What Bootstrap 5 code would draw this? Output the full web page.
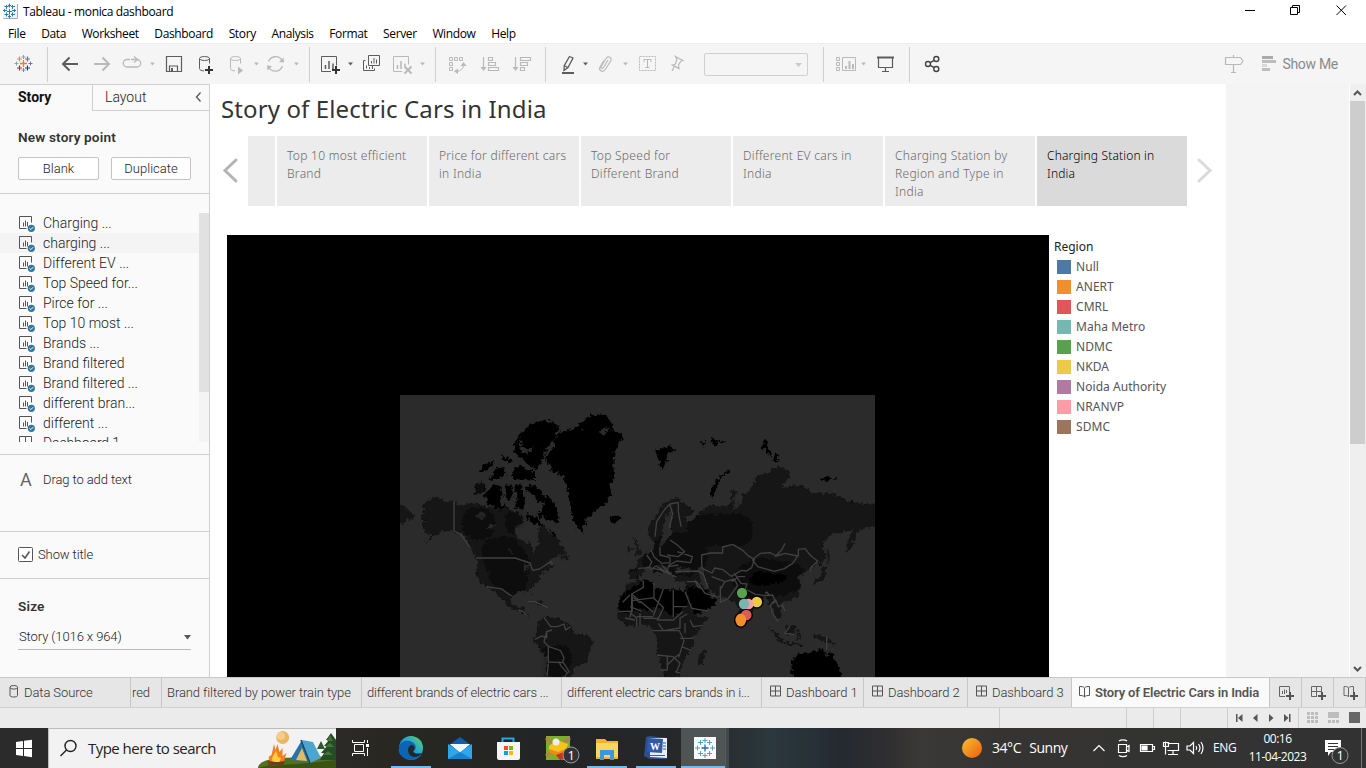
<!DOCTYPE html>
<html lang="en">
<head>
<meta charset="utf-8">
<title>Tableau - monica dashboard</title>
<link rel="stylesheet" href="https://cdn.jsdelivr.net/npm/bootstrap@5.3.0/dist/css/bootstrap.min.css">
<style>
  body{width:1366px;height:768px;overflow:hidden;background:#fff;color:#000;font:12px/1.2 "Open Sans","Noto Sans",sans-serif}
  svg{display:block;flex:none}
  .titlebar{height:23px}
  .titlebar span{letter-spacing:-.35px;padding-top:5px}
  .menubar{height:20px;padding-left:8px;gap:15.6px;letter-spacing:-.36px;padding-top:4px}
  .toolbar{height:41px;background:#f5f5f5;border-top:1px solid #ececec}
  .toolbar svg{margin-top:-1px}
  .toolbar .vline{width:1px;height:35px;margin-top:3px;background:#cfcfcf;flex:none}
  .d{stroke:#5c5c5c;fill:none}.g{stroke:#b9b9b9;fill:none}
  .df{fill:#5c5c5c;stroke:none}.gf{fill:#b9b9b9;stroke:none}
  .combo{width:104px;height:23px;margin:9px 0 0;border:1px solid #d0d0d0;border-radius:2px}
  .showme{font:14px/40px Roboto,sans-serif;color:#8a8a8a;letter-spacing:-.3px}
  .workspace{height:593px}
  .side{width:210px;background:#fafafa;border-right:1px solid #cfcfcf;border-top:1px solid #cfcfcf;font:300 13px/20px Roboto,sans-serif;color:#222;flex:none}
  .side h2{font:600 13.6px/16px Roboto,sans-serif;color:#333;margin:0;letter-spacing:.15px}
  .paneltabs{height:26px}
  .pt-on{width:92px;padding-left:18px;font-weight:700;color:#111;font-size:14px;line-height:25px}
  .pt-off{width:117px;padding:0 7px 0 12px;border-left:1px solid #cfcfcf;border-bottom:1px solid #cfcfcf;font-size:14px;line-height:24px}
  .sbtn{height:23px;padding:0;border:1px solid #c4c4c4;border-radius:2px;background:#fff;font:300 13px/21px Roboto,sans-serif;color:#222;text-align:center}
  .sec{border-bottom:1px solid #cfcfcf}
  .pointhead{padding:18px 0 0 18px}
  .pointbtns{padding:12px 0 0 18px;gap:12px}
  .tight{letter-spacing:-.1px}
  .sheets{height:229px;overflow:hidden}
  .sheetrow{height:20px;padding-left:18px;gap:7px;font-weight:300;font-size:14px;color:#222;line-height:21px}
  .sheetrow.hov{background:#f4f4f4}
  .rail{width:10px;height:229px;background:#f4f4f4}.rail div{height:179px;background:#e1e1e1}
  .sizebox{border-bottom:1px solid #bbb;height:27px;padding:4px 0 0 1px;margin-top:9px}
  .canvas{width:1016px;background:#fff;flex:none}
  .canvas,.canvas h1{font-family:"Noto Sans",sans-serif}
  .canvas h1{font-size:24px;line-height:30px;font-weight:400;color:#333;margin:0;padding:10px 0 0 11px;height:52px;letter-spacing:.12px}
  .points{gap:2px;height:70px}
  .pnt{width:150px;height:70px;background:#ececec;padding:11px 4px 0 10px;font:300 12px/18px "Noto Sans",sans-serif;color:#6a6a6a;flex:none;letter-spacing:.28px}
  .pnt.on{background:#dadada;color:#000;letter-spacing:.15px}
  .viz{width:822px;height:442px;background:#000;flex:none;padding:160px 0 0 173px}
  .vizrow{margin:29px 0 0 17px}
  .legend{padding:2px 0 0 5px;font-size:12px;color:#555}
  .legend b{display:block;font-weight:400;color:#222;line-height:20px;letter-spacing:0}
  .legend div{height:20px;gap:5px;padding-left:3px;line-height:20px;letter-spacing:.05px}
  .legend i{width:14px;height:14px;margin-top:-1px}
  .c1{background:#4e79a7}.c2{background:#f28e2b}.c3{background:#e15759}.c4{background:#76b7b2}.c5{background:#59a14f}.c6{background:#edc948}.c7{background:#b07aa1}.c8{background:#ff9da7}.c9{background:#9c755f}
  .void{width:123px;background:#f4f4f4}
  .scroll{width:17px;background:#efefef;border-left:1px solid #fff}
  .thumb{height:343px;background:#cdcdcd;width:15px;margin-left:0}
  .tabs{height:31px;background:#e6e6e6;border-top:1px solid #c8c8c8;border-bottom:1px solid #d0d0d0;font:300 13px/29px Roboto,sans-serif;color:#333;letter-spacing:-.09px}
  .stab{border-right:1px solid #c6c6c6;white-space:nowrap;overflow:hidden;flex:none;padding-left:5px}
  .stab.on{background:#fafafa;font-weight:600;color:#555;letter-spacing:-.15px}
  .stab.act{width:32px;padding:0}
  .w200{width:200px}
  .status{height:20px;background:#ebebeb;padding-right:1px}
  .cell{border-left:1px solid #cdcdcd;height:20px;flex:none}
  .taskbar{height:40px;background:linear-gradient(90deg,#2b2b2b 0,#2c2b29 336px,#282722 380px,#232426 560px,#262829 700px,#2b383d 770px,#263036 815px,#252931 840px,#302f30 890px,#3b3937 920px,#353433 1000px,#323232 1366px);color:#fff}
  .search{width:288px;background:#f2f2f2;border:1px solid #bcbcbc;border-bottom:0;border-right:0;color:#222;font-size:15px;line-height:39px;letter-spacing:-.53px}
  .temp{font-size:14px;line-height:40px;letter-spacing:-.45px;word-spacing:5px;width:92px}
  .lang{font-size:12px;line-height:39px;letter-spacing:-.4px;width:29px}
  .clock{font-size:12px;line-height:18px;letter-spacing:-.5px;width:71px;padding-top:2px}
</style>
</head>
<body>
<svg width="0" height="0" class="position-absolute">
  <defs>
    <symbol id="sheet" viewBox="0 0 18 20"><path d="M8.500 15.500H1.500V3.500H13.500V9.500" fill="none" stroke="#555"/><path d="M5.500 9.500v4M7.500 7.500v6M9.500 9v4.500" stroke="#555"/><circle cx="13.300" cy="15.300" r="3.600" fill="#31779c"/><path d="M11.500 15.300l1.400 1.300 2.300-2.400" stroke="#fff" fill="none"/></symbol>
    <symbol id="dash" viewBox="0 0 13 13"><path d="M1.500 1.500h10v10h-10zM6.500 1.500v10M1.500 6.500h10" fill="none" stroke="#555"/></symbol>
  </defs>
</svg>

<header>
  <div class="titlebar d-flex">
    <svg width="23" height="23"><path d="M3.500 18.500H17.500V4" fill="none" stroke="#aaa"/><path fill="#f1f5f7" d="M3 4h14v14H3z"/><g stroke="#2f7da8"><path d="M7 11.500h5M9.500 9v5M9.500 3.500v4M8 5.500h3M9.500 14.500v4M8 16.500h3M3 10.500h4M4.500 9v3M12 10.500h4M14.500 9v3M4.500 6.500h4M6.500 5v4M11 6.500h4M12.500 5v4M4.500 14.500h4M6.500 12.500v4M11 14.500h4M12.500 12.500v4"/></g></svg>
    <span>Tableau - monica dashboard</span>
    <svg class="ms-auto" width="136" height="23" viewBox="1230 0 136 23" fill="none" stroke="#000"><path d="M1245 10.500h10M1290.500 7.500h7v7h-7zM1292.500 7.500v-2h7v7h-2M1336.500 5.500l9.500 9.500M1346 5.500l-9.500 9.500"/></svg>
  </div>
  <nav class="menubar d-flex">
    <span>File</span><span>Data</span><span>Worksheet</span><span>Dashboard</span><span>Story</span><span>Analysis</span><span>Format</span><span>Server</span><span>Window</span><span>Help</span>
  </nav>
  <div class="toolbar d-flex">
    <svg width="47" height="41" viewBox="0 43 47 41" fill="none"><path d="M23.500 60v7M20 63.500h7" stroke="#eb7b30" stroke-width="1.300"/><path d="M23.500 55v4M21.500 57h4M14.500 63.500h4M16.500 61.500v4" stroke="#7ba6b5"/><path d="M28.500 63.500h4M30.500 61.500v4" stroke="#6a75a8"/><path d="M23.500 68v4M21.500 70h4" stroke="#7d88ad"/><path d="M17 59h5M19.500 56.500v5" stroke="#e8912d" stroke-width="1.200"/><path d="M25 59h5M27.500 56.500v5" stroke="#4c7e93" stroke-width="1.200"/><path d="M17 68h5M19.500 65.500v5" stroke="#c72035" stroke-width="1.200"/><path d="M25 68h5M27.500 65.500v5" stroke="#1f447e" stroke-width="1.200"/></svg>
    <div class="vline"></div>
    <svg width="38" height="41" viewBox="48 43 38 41" class="d" stroke-width="2"><path d="M63 64h15M69.500 57.500L63 64l6.500 6.500"/></svg>
    <svg width="32" height="41" viewBox="86 43 32 41" class="g" stroke-width="2"><path d="M94 64h15M102.500 57.500L109 64l-6.500 6.500"/></svg>
    <svg width="42" height="41" viewBox="118 43 42 41" class="g" stroke-width="1.300"><path d="M130 59.500h-3a3.700 3.700 0 0 0 0 7.500h10a3.700 3.700 0 0 0 0-7.500h-3M131 59.500h5M134 56.500l3.500 3-3.500 3"/><path class="gf" d="M150 62.500h5l-2.500 3z"/></svg>
    <svg width="30" height="41" viewBox="160 43 30 41" class="d"><path d="M166.500 56.500h15v15h-15zM169.500 71v-5h8v5" stroke-width="1.200"/><path class="df" d="M171 68h2v4h-2z"/></svg>
    <svg width="32" height="41" viewBox="190 43 32 41" class="d"><path d="M199.500 58.500v10c0 1.500 2 2.300 4.500 2.400M209.500 58.500v5"/><ellipse cx="204.500" cy="58.500" rx="5" ry="2"/><path d="M209 66v8M205 70h8" stroke="#333" stroke-width="2"/></svg>
    <svg width="40" height="41" viewBox="222 43 40 41" class="g"><path d="M230.500 58.500v10c0 1.500 2 2.300 4.500 2.400M240.500 58.500v5"/><ellipse cx="235.500" cy="58.500" rx="5" ry="2"/><path class="gf" d="M238 66.500l5 4-5 4zM254 62.500h5l-2.500 3z"/></svg>
    <svg width="47" height="41" viewBox="262 43 47 41" class="g" stroke-width="1.300"><path d="M268.500 61.500a7.500 7.500 0 0 1 13.500-1M282.500 66a7.500 7.500 0 0 1-13.500 1.500"/><path class="gf" d="M279 62l5 .5-.5-5zM272 66l-5-.5.5 5zM294 62.500h5l-2.500 3z"/></svg>
    <div class="vline"></div>
    <svg width="46" height="41" viewBox="310 43 46 41" class="d"><path d="M331 71.500h-9.500v-15h15v9" /><path d="M325.500 65v4M329 61v8M333 63.500v5.500" stroke-width="1.500"/><path d="M336 66v8M332 70h8" stroke="#333" stroke-width="2"/><path class="df" d="M348 62.500h5l-2.500 3z"/></svg>
    <svg width="30" height="41" viewBox="356 43 30 41" class="d"><path d="M368.500 55.500h11v10h-11zM365.500 60.500h-2v10h11v-2M366.500 65.500v3M369.500 67v2M372.500 66v3M371.500 61v2.500M374 58v5.500M376.500 59.500v4"/></svg>
    <svg width="49" height="41" viewBox="386 43 49 41" class="g"><path d="M402 71.500h-8.500v-15h15v8"/><path d="M397.500 65v4M401 61v8M405 63.500v3" stroke-width="1.500"/><path d="M404.500 66.500l7 7M411.500 66.500l-7 7" stroke-width="2"/><path class="gf" d="M420 62.500h5l-2.500 3z"/></svg>
    <div class="vline"></div>
    <svg width="36" height="41" viewBox="436 43 36 41" class="g"><path d="M449.500 57.500h3v3h-3zM454.500 57.500h3v3h-3zM459.500 57.500h3v3h-3zM449.500 62.500h3v3h-3zM449.500 67.500h3v3h-3zM463.500 64.500c0 4-2.500 6.500-7 7"/><path class="gf" d="M460.500 66l3-4 3 4zM458 68.500v5.500l-4-2.700z"/></svg>
    <svg width="34" height="41" viewBox="472 43 34 41" class="g" stroke-width="1.200"><path d="M483.500 57v11"/><path class="gf" d="M480.500 67h6l-3 4z"/><path d="M488.500 57.500h4v3h-4zM488.500 62.500h7v3h-7zM488.500 67.500h10v3h-10z"/></svg>
    <svg width="39" height="41" viewBox="506 43 39 41" class="g" stroke-width="1.200"><path d="M515.500 57v11"/><path class="gf" d="M512.500 67h6l-3 4z"/><path d="M520.500 57.500h10v3h-10zM520.500 62.500h7v3h-7zM520.500 67.500h4v3h-4z"/></svg>
    <div class="vline"></div>
    <svg width="46" height="41" viewBox="546 43 46 41" class="d"><path d="M569.500 56.500l3.500 1.500-5 9.500-4 3 .2-4.700zM564 65.500l3.700 2" stroke-width="1.300"/><path class="df" d="M562 72h12v2h-12zM583 62.500h5l-2.500 3z"/></svg>
    <svg width="40" height="41" viewBox="592 43 40 41" class="g" stroke-width="1.200"><path d="M608 60l-4.500 7.500c-1 1.500-3 .5-2.300-1l4.800-8c2-3 6.500-1 4.700 2.500l-5.500 8.500c-2.500 3.500-7 1-5.200-2.500l4-6.500"/><path class="gf" d="M623 62.500h5l-2.500 3z"/></svg>
    <svg width="32" height="41" viewBox="632 43 32 41" class="g"><path d="M639.500 56.500h16v14h-16z" stroke-dasharray="2 1"/><path d="M644 62v-2.500h7V62M647.500 59.500v8M645.500 67.500h4"/></svg>
    <svg width="40" height="41" viewBox="664 43 40 41" class="g" stroke-width="1.200"><path d="M675.500 56.500l7.500 4-2 .5-2.500 4 .5 3.500-3.500-2-3-1.500 3-1 1.500-5zM674.500 66l-2.500 5M671.500 64.500l7 4"/></svg>
    <div class="combo"><svg width="102" height="21"><path class="gf" d="M90 10h7l-3.500 4z" opacity=".7"/></svg></div>
    <svg width="15" height="41"></svg>
    <div class="vline"></div>
    <svg width="46" height="41" viewBox="824 43 46 41" class="g"><path d="M836.500 57.500h3v3h-3zM836.500 62.500h3v3h-3zM836.500 67.500h3v3h-3zM842.500 57.500h13v13h-13z"/><path d="M846 66v3M849.500 61v8M853 64v5" stroke-width="2"/><path class="gf" d="M861 62.500h5l-2.500 3z"/></svg>
    <svg width="39" height="41" viewBox="870 43 39 41" class="d"><path d="M877 57.500h17" stroke-width="2"/><path d="M878.500 58v9.500h14V58M885.500 68v4M882 71.500h7" stroke-width="1.200"/></svg>
    <div class="vline"></div>
    <svg width="40" height="41" viewBox="910 43 40 41" fill="none" stroke="#444" stroke-width="1.400"><circle cx="928" cy="64" r="2.500"/><circle cx="936.300" cy="59" r="2.500"/><circle cx="936.300" cy="69" r="2.500"/><path d="M930.300 62.700l3.800-2.400M930.300 65.300l3.800 2.400"/></svg>
    <svg class="ms-auto" width="62" height="41" viewBox="1221 43 62 41" class="g"><path stroke="#b9b9b9" fill="none" stroke-width="1.200" d="M1226.500 57.500h15l2.500 3.500-2.500 3.500h-15zM1234.500 55v2M1234.500 65v7.500M1232 72.500h5"/><path fill="#aaa" d="M1263 56h11v3h-11z"/><path fill="#bdbdbd" d="M1263 60h14v3h-14zM1263 68h8v3h-8z"/><path fill="#d8d8d8" d="M1263 64h5v3h-5z"/></svg>
    <span class="showme">Show Me</span><svg width="28" height="41"></svg>
  </div>
</header>

<main class="workspace d-flex">
  <aside class="side d-flex flex-column">
    <div class="paneltabs d-flex flex-shrink-0"><div class="pt-on">Story</div><div class="pt-off d-flex justify-content-between"><span>Layout</span><svg width="8" height="24" fill="none" stroke="#555" stroke-width="1.300"><path d="M6.500 7.500L2.500 12l4 4.500"/></svg></div></div>
    <div class="sec" style="height:83px">
      <h2 class="pointhead">New story point</h2>
      <div class="pointbtns d-flex"><button class="sbtn" style="width:81px">Blank</button><button class="sbtn" style="width:80px">Duplicate</button></div>
    </div>
    <div class="sec d-flex" style="height:261px;padding-top:19px">
      <div class="sheets flex-grow-1">
        <div class="sheetrow d-flex"><svg width="18" height="20"><use href="#sheet"/></svg>Charging ...</div>
        <div class="sheetrow hov d-flex"><svg width="18" height="20"><use href="#sheet"/></svg>charging ...</div>
        <div class="sheetrow d-flex"><svg width="18" height="20"><use href="#sheet"/></svg>Different EV ...</div>
        <div class="sheetrow d-flex"><svg width="18" height="20"><use href="#sheet"/></svg>Top Speed for...</div>
        <div class="sheetrow d-flex"><svg width="18" height="20"><use href="#sheet"/></svg>Pirce for ...</div>
        <div class="sheetrow d-flex"><svg width="18" height="20"><use href="#sheet"/></svg>Top 10 most ...</div>
        <div class="sheetrow d-flex"><svg width="18" height="20"><use href="#sheet"/></svg>Brands ...</div>
        <div class="sheetrow d-flex"><svg width="18" height="20"><use href="#sheet"/></svg>Brand filtered</div>
        <div class="sheetrow d-flex"><svg width="18" height="20"><use href="#sheet"/></svg>Brand filtered ...</div>
        <div class="sheetrow d-flex"><svg width="18" height="20"><use href="#sheet"/></svg>different bran...</div>
        <div class="sheetrow d-flex"><svg width="18" height="20"><use href="#sheet"/></svg>different ...</div>
        <div class="sheetrow d-flex tight"><svg width="18" height="20"><path d="M1.500 15.500v-12h12v12M7.500 4v12" fill="none" stroke="#555"/></svg>Dashboard 1</div>
      </div>
      <div class="rail"><div></div></div>
    </div>
    <div class="sec d-flex" style="height:77px;padding:15px 0 0 20px"><span style="width:23px;font-size:18px;font-weight:400;color:#666">A</span><span class="tight">Drag to add text</span></div>
    <div class="sec d-flex" style="height:47px;padding:13px 0 0 18px"><svg width="20" height="20"><rect x=".5" y="2.500" width="14" height="14" rx="1" fill="#fff" stroke="#555"/><path d="M4 10l3 3 4.500-6.500" fill="none" stroke="#555" stroke-width="1.600"/></svg><span class="tight">Show title</span></div>
    <div style="padding:19px 18px 0"><h2>Size</h2><div class="sizebox d-flex justify-content-between"><span class="tight">Story (1016 x 964)</span><svg width="9" height="20"><path d="M2 8h7l-3.500 4.500z" fill="#555"/></svg></div></div>
  </aside>

  <section class="canvas">
    <h1>Story of Electric Cars in India</h1>
    <div class="points d-flex">
      <svg width="36" height="70" viewBox="210 136 36 70"><path d="M236 160l-11 10.500 11 10.500" fill="none" stroke="#b4b4b4" stroke-width="3" stroke-linecap="round"/></svg>
      <div class="pnt p-0" style="width:27px"></div>
      <div class="pnt">Top 10 most efficient Brand</div>
      <div class="pnt">Price for different cars in India</div>
      <div class="pnt">Top Speed for<br>Different Brand</div>
      <div class="pnt">Different EV cars in India</div>
      <div class="pnt">Charging Station by Region and Type in India</div>
      <div class="pnt on">Charging Station in India</div>
      <svg width="30" height="70" viewBox="1189 136 30 70"><path d="M1199 160l11 10.500-11 10.500" fill="none" stroke="#dadada" stroke-width="3" stroke-linecap="round"/></svg>
    </div>
    <div class="vizrow d-flex">
      <div class="viz">
        <svg width="475" height="282" viewBox="400 395 475 282">
          <defs>
            <filter id="coast" x="-5%" y="-5%" width="110%" height="110%"><feTurbulence type="fractalNoise" baseFrequency=".28" numOctaves="2" seed="4"/><feDisplacementMap in="SourceGraphic" scale="7" xChannelSelector="R" yChannelSelector="G"/></filter>
            <filter id="soft" x="-60%" y="-60%" width="220%" height="220%"><feGaussianBlur stdDeviation="12"/></filter>
          </defs>
          <rect x="400" y="395" width="475" height="282" fill="#2b2b2b"/>
          <g filter="url(#coast)">
          <g transform="translate(400 390) scale(.33333)">
            <g fill="#121212">
              <path d="M60 380L75 372 66 348 85 330 100 322 130 330 160 338 185 345 215 338 240 345 265 350 290 352 310 345 330 362 350 365 365 378 372 395 350 410 347 435 360 450 385 460 398 475 402 490 410 470 418 455 412 430 420 410 440 415 455 440 465 430 475 455 490 475 498 488 480 498 455 505 440 520 470 530 450 535 430 545 415 570 408 580 385 600 398 618 390 602 360 605 340 610 333 630 338 645 358 655 375 650 372 665 390 680 370 672 350 662 325 650 300 620 280 600 260 592 240 575 228 550 235 515 225 495 208 465 190 435 165 425 125 420 100 440 70 465 100 432 75 430 65 405 75 395z"/>
              <path d="M-10 340L15 350 40 375 42 388 20 388 8 405-10 395z"/>
              <path d="M482 502l15-10 12 20-12-2zM395 632l25 5 22 15-25-8z"/>
              <path d="M400 745L415 720 412 695 435 680 475 685 515 712 525 730 560 738 582 755 565 790 560 815 525 830 512 862 440 862 442 800 420 780 402 755z"/>
            </g>
            <g fill="#000">
              <path d="M437 210L445 185 465 170 460 150 480 125 505 120 530 110 550 95 575 75 600 73 625 82 640 105 635 120 655 130 672 138 655 165 643 190 640 230 643 265 628 285 635 310 615 345 590 360 560 385 548 428 530 415 518 385 508 340 503 300 492 262 470 248 445 245 455 230z"/>
              <path d="M342 165L355 140 375 118 400 98 430 92 465 95 476 118 460 150 445 170 430 200 420 225 405 240 385 225 365 208 345 190z"/>
              <path d="M628 380l30-5 7 12-20 12-15-6z"/>
              <path d="M240 240l20-22 22-5-5 15-15 8-20 14zM285 235l28-3 5 20-22 12-20-4zM304 195l22 8 15 12-6 8-28-12zM340 236l30-8 15 14 20 2v30l-30-4-36-4zM265 262l20 0 20 6-25 6z" />
              <path d="M250 315l18-14 14-20 20 10 6 25-6 28 20 10-20 4-40-16 0-12zM316 284h18l5 28-10 20-12-12zM345 285l18-5 4 30 10 25-8 24-24-8 8-20zM376 290l30-5 14 18 15 14 20 10 18 40 5 25-10 12-10-18-16 6-12-14-12 5-8-14 15-5 8-24-20-5-6-20-18-4zM380 370l20 5 30 30 30 20 6 20-20-30-40-12-22-10z"/>
            </g>
            <path d="M226 280l25-4 8 18-22 22-12-4z" fill="#090909"/>
            <g fill="#2b2b2b"><path d="M225 378l15-12 18 8-15 15zM256 412l18-6 16-4-16 15zM325 475l8 2 6 18-8-4zM370 520l20 5-12 22-6-4z"/><path d="M355 152l18 8-12 14 25 4 16-8-10 16-28 4zM595 125l20-10 20 2-14 6-8 14zM535 105l10 18 4-3z"/></g>
            <g fill="#000" filter="url(#soft)" opacity=".55"><path d="M270 480l50-15 40 50-10 80-50-30zM350 370l18 5-8 25-20 10zM445 800l45-8-20 70h-30z"/><circle cx="235" cy="400" r="22"/></g>
          </g>
          <g transform="translate(630 390) scale(.33333)">
            <path fill="#121212" d="M52 430L60 400 80 375 95 345 120 330 145 325 160 340 190 360 185 375 165 375 170 400 190 385 215 365 240 345 270 350 300 345 305 300 318 300 322 345 335 340 335 312 350 315 370 285 375 260 410 250 445 228 480 245 475 270 450 292 520 285 545 310 600 310 660 335 690 340 735 345 750 345 750 405 700 415 680 425 660 480 650 485 652 455 670 420 640 425 600 435 575 465 588 500 575 525 560 515 545 530 520 552 505 556 512 590 500 620 470 635 450 640 455 680 440 690 425 660 415 640 410 610 395 640 370 660 348 702 330 670 320 640 300 630 270 620 250 608 235 590 210 575 235 605 262 632 240 655 200 678 180 650 165 605 170 575 135 572 130 555 108 555 95 545 90 552 70 545 55 525 40 545 25 568 0 570 0 540 25 535 22 510 50 490 70 480 75 455 58 445z"/>
            <path fill="#121212" d="M-5 580L40 570 70 575 75 592 100 600 130 598 165 602 180 650 200 682 232 682 215 715 190 740 190 770 165 800 155 835 140 865 105 865 90 810 78 790 85 750 68 720 60 705 20 705 0 708-20 700-37 680-35 645-20 610z"/>
            <path fill="#121212" d="M8 440l12 15 15 38-20 8 5-25zM-8 475l10-8 4 14-12 8zM-3 540l22 2 8 28-30-2zM205 800l15-20 8 5-10 38-14 6zM465 710l30-5-2 25-18 8zM415 710l25 20 25 25-15 2zM545 735l35 2 38 28-35-8zM578 530l10 0-3 30-35 25 2-10 20-15zM592 480l6 0 0 42-5 0zM440 755l40 2 40 8-4 3-40-4zM500 720l8 0 2 30-8 0z"/>
            <g fill="#000"><path d="M-28 615L40 573 72 578 76 595 130 600 165 604 172 640 150 665 130 680 90 655-35 668z"/><path d="M172 590l35 5 32 18 22 20-20 22-42 18-22-40z"/>
              <path d="M482 815L510 790 545 785 575 778 590 800 600 780 620 820 635 850 635 870 490 870z"/>
              <path d="M75 182l20-8 12 2 15-7 14 12-22 8-6 14 16 20-16-12-8 26-8-12zM398 160l10-14 8 14-4 12 12 14 2 14-14-8-8-14-8-6zM426 210l10-20 10 20-14 6zM238 310l20-40 44-34-4 10-30 24-20 54z"/>
              <path d="M575 262h12l6-8 8 12 8-3-4 10-28-2zM612 264l12 4-8 3zM212 160h12v6h-10zM225 153h8v6zM240 157l12-12 12 10 24-5-6 10-14 0-12 8-8-8z"/></g>
            <g fill="#2b2b2b"><path d="M102 390l20-32 5 18-8 36 15 10-18 20-20 25-8 0 10-30zM205 530l15 0 5 30 12 35-20-8-8-30zM135 530l45 5 0 12-40 2zM80 525l30 40 18-10-28-28zM300 372l14-18-2-40 9 2 0 40z"/></g>
            <g fill="#000" filter="url(#soft)" opacity=".8"><path d="M340 560l50-30 70 15 40 5-20 30-90 20-50-20z"/></g>
            <g fill="#000" filter="url(#soft)" opacity=".4"><path d="M100 460l90-10 20 50-40 40zM70 480h70v45H60zM200 400h140v40h-140z"/></g>
          </g></g>
          <g fill="none" stroke="#414141" stroke-width="4" stroke-linejoin="round">
            <path transform="translate(400 390) scale(.33333)" d="M162 335v88l20 10 15 20 12 18M228 504h117l45 15 8 22 20-4 35-22 5 10M258 590l45 6 20 14 12 8M355 660l15 5 10 12M432 682l20 28 20 0 20-8 5 18 15-10M405 748l20-10 15 5 0-18 16-5M440 725l-8 30 15 15 35 12 10 22-5 15M445 768v48l45 2 12 18 6 12M445 820l-4 40M476 815l8 14 18 20-8 12M385 635l20 0 38 18M697 620v44h-42M697 620l25 20M690 615l-22 22"/>
            <g transform="translate(630 390) scale(.33333)">
              <path d="M75 440l5-45 25-38 15-15 25-5 0 28 8 45M120 345l8 25-10 45M120 450l22 15 22 20-20 15-32-5M90 470v25l30 8v15l-25 2-22-18-10-22M142 485l45 15-5 18-42-5-25 14M50 495l15 20-8 18 32 6 22 10 28 12M25 535l35-2M60 540l18-12 32 20 5-18 30-5M95 525l35 35"/>
              <path d="M215 515l0-20 25-6 38 0 0-18 30-8 30 18 15 15 20 12-8 25-15 10-16-2-30 18-25-20-25-5-8 15-30-14zM372 505l20-15 28-2 20 10 25-8 38 8-15 22-25 16-30 8-50-14-15-20zM435 500l20-20 10-20M505 500l0-22 20-2 18 22 20 15-22 22-2 10"/>
              <path d="M135 545l70-2 15 10 14 42M170 575l30 0 25 35 35 10M245 560l40 15 28-8 10 20-30 40-22 10 0-48M285 575l-12 20M313 550l20 30 18 2-5 15 30 16 32 4 20-2 8 20-15 10 5 22 18 28M405 610l5-4 10 12M345 560l-20 0-18 15M425 640l12-10 8 20 12-5 8 18"/>
              <path d="M40 572v20l-35 20v50l-5 20M72 578v45L8 632M5 612l65 55M72 625l30 30 0 0M130 600v82M130 650h40M165 605l20 50 48 8M100 597l-30 80M100 655l-15 30-45 0M30 670v36M0 668l20 16v24M80 690l50 0 28-25M85 700l15 22 50-8 0-30 22-12M68 722h80l14 30-16 50M80 795l50 5M150 745l40 0M155 770l30 12M112 800l0 40-20 0M112 825l24-24 15-10M130 800l20 20-10 25M180 690l10 20 30-4M165 700v30M480 710l-16 20 30 4M590 740v40M195 570l8 20 14 6M0 650l36 14M20 680h50M15 690l-30-6M135 845l14 4"/>
            </g>
          </g>
          <g fill="#000"><circle cx="756.800" cy="602" r="6.600"/><circle cx="742" cy="593" r="5.800"/><circle cx="746.300" cy="615" r="6.600"/><ellipse cx="740.800" cy="620" rx="6.800" ry="7.800"/></g>
          <circle cx="756.800" cy="602" r="5.300" fill="#edc948"/><circle cx="742" cy="593" r="5.200" fill="#59a14f"/><circle cx="748.500" cy="604" r="5.200" fill="#ff9da7"/><circle cx="744" cy="604" r="5.200" fill="#76b7b2"/><circle cx="746.300" cy="615" r="5.300" fill="#e15759"/><ellipse cx="740.800" cy="620" rx="5.400" ry="6.400" fill="#f28e2b"/>
        </svg>
      </div>
      <div class="legend"><b>Region</b>
        <div class="d-flex align-items-center"><i class="c1"></i>Null</div>
        <div class="d-flex align-items-center"><i class="c2"></i>ANERT</div>
        <div class="d-flex align-items-center"><i class="c3"></i>CMRL</div>
        <div class="d-flex align-items-center"><i class="c4"></i>Maha Metro</div>
        <div class="d-flex align-items-center"><i class="c5"></i>NDMC</div>
        <div class="d-flex align-items-center"><i class="c6"></i>NKDA</div>
        <div class="d-flex align-items-center"><i class="c7"></i>Noida Authority</div>
        <div class="d-flex align-items-center"><i class="c8"></i>NRANVP</div>
        <div class="d-flex align-items-center"><i class="c9"></i>SDMC</div>
      </div>
    </div>
  </section>
  <div class="void"></div>
  <div class="scroll d-flex flex-column justify-content-between">
    <div><svg width="16" height="17" fill="none" stroke="#555" stroke-width="2"><path d="M4 11l3.500-3.500L11 11"/></svg><div class="thumb"></div></div>
    <svg width="16" height="17" fill="none" stroke="#555" stroke-width="2"><path d="M4 7l3.500 3.500L11 7"/></svg>
  </div>
</main>

<nav class="tabs d-flex">
  <div class="stab d-flex gap-1" style="width:131px;padding-left:8px"><svg width="12" height="28" fill="none" stroke="#555"><path d="M2 9.500v8c0 2 7.500 2 7.500 0v-8"/><ellipse cx="5.800" cy="9.300" rx="3.800" ry="1.800"/></svg>Data Source</div>
  <div class="stab" style="width:31px;padding-left:1px">red</div>
  <div class="stab w200">Brand filtered by power train type</div>
  <div class="stab w200" style="letter-spacing:-.22px">different brands of electric cars ...</div>
  <div class="stab w200" style="letter-spacing:-.22px">different electric cars brands in i...</div>
  <div class="stab d-flex" style="width:102px;padding-left:7px"><svg class="me-1" width="13" height="28"><use href="#dash" y="6.500" width="13" height="13"/></svg>Dashboard 1</div>
  <div class="stab d-flex" style="width:104px;padding-left:7px"><svg class="me-1" width="13" height="28"><use href="#dash" y="6.500" width="13" height="13"/></svg>Dashboard 2</div>
  <div class="stab d-flex" style="width:104px;padding-left:7px"><svg class="me-1" width="13" height="28"><use href="#dash" y="6.500" width="13" height="13"/></svg>Dashboard 3</div>
  <div class="stab on d-flex" style="width:198px;padding-left:6px"><svg class="me-1" width="13" height="28" viewBox="0 0 13 28" fill="none" stroke="#555"><path d="M6.500 10v9M1.500 8.500c2 0 4 0 5 1.500 1-1.500 3-1.500 5-1.500v9c-2 0-4 0-5 1.500-1-1.500-3-1.500-5-1.500z"/></svg>Story of Electric Cars in India</div>
  <div class="stab act"><svg width="31" height="28" fill="none" stroke="#666"><path d="M15 18.500H9.500v-10h10V14M12.500 13v3M14.500 11.500V16M16.500 12v3"/><path d="M20 14v8M16 18h8" stroke="#555" stroke-width="2"/></svg></div>
  <div class="stab act"><svg width="31" height="28" fill="none" stroke="#666"><path d="M15 18.500H9.500v-10h10V14M14.500 9v9M9.500 13.500h10"/><path d="M20 14v8M16 18h8" stroke="#555" stroke-width="2"/></svg></div>
  <div class="stab act"><svg width="31" height="28" fill="none" stroke="#666"><path d="M14.500 10v9M15 19c-1-1.500-3-1.500-5-1.500v-9c2 0 4 0 4.500 1.500 1-1.500 3-1.500 5-1.500V14"/><path d="M20 14v8M16 18h8" stroke="#555" stroke-width="2"/></svg></div>
</nav>
<div class="status d-flex justify-content-end">
  <div class="cell" style="width:127px"></div><div class="cell" style="width:27px"></div><div class="cell" style="width:27px"></div><div class="cell" style="width:47px"></div>
  <div class="cell" style="width:71px"><svg width="70" height="20" fill="#555"><path d="M8 6h1.500v8H8zM14.500 6v8L10 10zM29.500 6v8L25 10zM41 6v8l4.500-4zM56 6v8l4.500-4zM61 6h1.500v8H61z"/></svg></div>
  <div class="cell" style="width:67px"><svg width="66" height="20"><path fill="#bdbdbd" d="M8 4h3v3H8zM12 4h3v3h-3zM16 4h3v3h-3zM8 8h3v3H8zM12 8h3v3h-3zM16 8h3v3h-3zM8 12h3v3H8zM12 12h3v3h-3zM16 12h3v3h-3zM29 4h11v6H29zM29 12h3v3h-3zM33 12h3v3h-3zM37 12h3v3h-3z"/><path fill="#666" d="M50 4h11v11H50z"/></svg></div>
</div>
<footer class="taskbar d-flex">
  <svg width="48" height="40" fill="#fff"><path d="M16 14l7-1v7h-7zM24 12.800l8-1.100V20h-8zM16 21h7v7l-7-1zM24 21h8v8.200L24 28z"/></svg>
  <div class="search d-flex">
    <svg width="39" height="39" fill="none" stroke="#222" stroke-width="1.400"><circle cx="21.500" cy="17" r="5.500"/><path d="M17.500 21l-6 6"/></svg>
    <span>Type here to search</span>
    <svg class="ms-auto" width="78" height="39" viewBox="258 729 78 39">
      <path d="M258 768c0-6 10-9 22-10l56-2v12z" fill="#566f1c"/><path d="M258 768c5-3 40-3 78-8v8z" fill="#3b5312"/>
      <circle cx="282.700" cy="737.500" r="6.500" fill="#eab564"/><circle cx="281" cy="736" r="4" fill="#f6cf87"/>
      <path d="M274 744l1.500 6 2-6 2 8 3-4v8l4-3-3 10h-13l-2-6 3-2z" fill="#f0811e"/><path d="M276 751l2 6 3 1-2 5h-6l-1-5z" fill="#ffcf3f"/><path d="M268 762l16 2M268 765l16-3" stroke="#703c1c" stroke-width="2"/>
      <path d="M331 733l-5 7h3l-5 6h3l-6 7h3l-4 7h16v-20z" fill="#234d26"/><path d="M330 735l3 6h-6zM325 747h9l-4-4zM323 755h10l-5-4z" fill="#477338"/><path d="M321 741l-4 8h8z" fill="#2d5a2c"/>
      <path d="M290 760l12-20 7 22z" fill="#2874a8"/><path d="M302 740l11 2 8 16-11 5z" fill="#4da5cd"/><path d="M296 760l6-12 5 13z" fill="#e6ba61"/><path d="M301 740l9 23" stroke="#17496f" stroke-width="1.500"/>
    </svg>
  </div>
  <svg width="51" height="40" viewBox="336 728 51 40" fill="none" stroke="#fff"><path d="M352.500 740v2.500h12V740M352.500 756v-2.500h12V756M354.500 744.500h9v7h-9zM367.500 740v3M367.500 748v8"/><path d="M366 744h3v3h-3z" fill="#fff" stroke="none"/></svg>
  <svg width="538" height="40" viewBox="387 728 538 40">
    <defs><linearGradient id="edge" x1="0" y1="1" x2="1" y2="0"><stop offset="0" stop-color="#0c59a4"/><stop offset=".5" stop-color="#1b9de2"/><stop offset="1" stop-color="#66d65c"/></linearGradient></defs>
    <rect x="681" y="728" width="44" height="40" fill="#4f5454"/><path d="M725.500 728v40" stroke="#555c5d"/><path d="M726 728h3v40h-3z" fill="#424a4d"/>
    <path fill="#76b9ed" d="M391 766h40v2h-40zM587 766h40v2h-40zM636 766h40v2h-40zM681 766h44v2h-44z"/>
    <circle cx="411" cy="748" r="12" fill="url(#edge)"/><path d="M399 748c1-7 8-9 13-6 4 2 5 6 2 9-2 1 0 3 3 3 2 0 4 0 5-1-4 7-14 9-19 4-4-3-5-6-4-9z" fill="#0b65b4"/><path d="M411 745c-4 2-4 8 0 11 4 2 8 1 11-3-4 1-8 1-9-2 3-2 2-6-2-6z" fill="#24272a"/>
    <path d="M448 746l12-9 12 9v3h-24z" fill="#0e5fb0"/><path d="M450 744h20l-10 9z" fill="#f4f8fb"/><path d="M448 744l12 8 12-8v15h-24z" fill="#2da7ec"/><path d="M450 744h20l-10 8z" fill="#f4f8fb"/><path d="M448 759l12-7 12 7z" fill="#1583cf"/>
    <path d="M502.500 743v-4.500h11v4.500" fill="none" stroke="#1fa9ea" stroke-width="2"/><path d="M497 742h23v16a2 2 0 0 1-2 2h-19a2 2 0 0 1-2-2z" fill="#f4f4f4"/><path fill="#ef4e24" d="M504 746h4v4h-4z"/><path fill="#7cb900" d="M509 746h4v4h-4z"/><path fill="#00a2ed" d="M504 751h4v4h-4z"/><path fill="#fdb800" d="M509 751h4v4h-4z"/>
    <path fill="#7fae2b" d="M546 736h24v24h-24z"/><path d="M546 738l24 20M570 738l-24 18" stroke="#b58150" stroke-width="3"/><path d="M549 746l8-6 11 4-2 6-9 4-8-4z" fill="#f5c51d"/><path d="M549 749l9 3 8-3-1 4-7 3-8-3z" fill="#f08a14"/><circle cx="556" cy="742" r="3.500" fill="#eee"/><path d="M556 755l8-3 4 6-8 2z" fill="#bd3327"/>
    <circle cx="571" cy="755" r="8" fill="#333" stroke="#999"/><text x="567.500" y="759.500" font-size="13" fill="#fff" font-family="Open Sans">1</text>
    <path d="M596 739h9l2 2h11v18h-22z" fill="#f2b42f"/><path d="M596 743h22v14h-22z" fill="#fcd462"/><path d="M600 750h14v10h-4v-5h-6v5h-4z" fill="#3b97df"/>
    <path d="M646 737l4-1 17 2v21l-17 0-6-3z" fill="#2c4f93"/><path d="M650 738h17v20l-17-1z" fill="#e8eff8"/><path d="M648 738l15 1-1 14-15-1z" fill="#315ba6"/><text x="650" y="750" font-size="10" font-weight="700" fill="#fff" font-family="Liberation Serif">W</text><path d="M663 743h3M663 746h3M663 749h3M650 755.500h15" stroke="#315ba6"/>
    <path fill="#f8fafb" d="M694 737h22v22h-22z"/><path d="M705 744.500v7M701.500 748h7" stroke="#276b9a" stroke-width="1.300"/><path d="M705 738v5M702.500 740.500h5M705 753v5M702.500 755.500h5M695 748h5M697.500 745.500v5M710 748h5M712.500 745.500v5M698 742.500h5M700.500 740v5M707 742.500h5M709.500 740v5M698 753.500h5M700.500 751v5M707 753.500h5M709.500 751v5" stroke="#5c9fc5"/>
  </svg>
  <svg width="67" height="40"><defs><linearGradient id="sun" x1="0" y1="0" x2="1" y2="1"><stop offset=".1" stop-color="#f3b72f"/><stop offset=".9" stop-color="#f0670f"/></linearGradient></defs><circle cx="47" cy="20" r="10" fill="url(#sun)"/></svg>
  <span class="temp">34°C Sunny</span>
  <svg width="129" height="40" viewBox="1084 728 129 40" fill="none" stroke="#fff" stroke-width="1.200"><path d="M1093.500 751l5.500-5.500 5.500 5.500M1118.500 744.500h8v8h-8zM1126.500 747l2.500-1.500v6l-2.500-1.500M1119 741c2-1.500 6-1.500 8 0M1119 755.500c2 1.500 6 1.500 8 0M1140.500 744.500h12v7h-12zM1152.500 746.500h2v3h-2M1167.500 743.500h11v7h-11M1165.500 741.500v13M1163.500 742.500h5v4h-5zM1168 754.500h10M1173 751v3M1187 746h3l3.500-3.500v11L1190 750h-3z"/><path d="M1142 746h5v4h-5z" fill="#fff"/><path d="M1196 746q1.500 2 0 4M1198.500 744q3 4 0 8M1201 742q4 6 0 12"/></svg>
  <span class="lang">ENG</span>
  <div class="clock text-center">00:16<br>11-04-2023</div>
  <svg width="53" height="40" viewBox="1313 728 53 40"><path d="M1325 740h16v12h-10l-3 4v-4h-3z" fill="#fff"/><path d="M1328 743.500h10M1328 746.500h10M1328 749.500h6" stroke="#333"/><circle cx="1340" cy="755.500" r="8" fill="#333" stroke="#999"/><text x="1336.500" y="760" font-size="13" fill="#fff" font-family="Open Sans">1</text><path d="M1361.500 728v40" stroke="#777"/></svg>
</footer>
<script src="https://cdn.jsdelivr.net/npm/bootstrap@5.3.0/dist/js/bootstrap.bundle.min.js"></script>
</body>
</html>
